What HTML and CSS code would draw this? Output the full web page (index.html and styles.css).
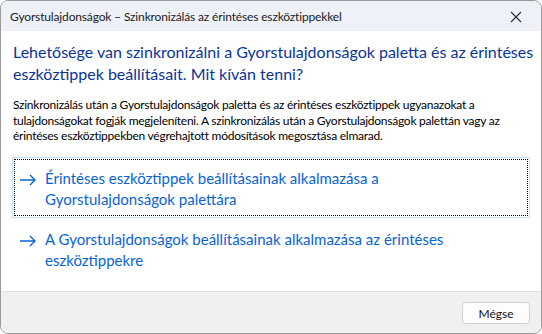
FILE: index.html
```html
<!DOCTYPE html>
<html lang="hu">
<head>
<meta charset="utf-8">
<link rel="stylesheet" href="styles.css">
</head>
<body>
<div class="window">
  <div class="titlebar">
    <span class="title">Gyorstulajdonságok – Szinkronizálás az érintéses eszköztippekkel</span>
    <svg class="close" width="12" height="12" viewBox="0 0 12 12"><path d="M1 1 L11 11 M11 1 L1 11" stroke="#2b2b2b" stroke-width="1.1" fill="none"/></svg>
  </div>
  <div class="content">
    <div class="heading">Lehetősége van szinkronizálni a Gyorstulajdonságok paletta és az érintéses<br>eszköztippek beállításait. Mit kíván tenni?</div>
    <div class="body">Szinkronizálás után a Gyorstulajdonságok paletta és az érintéses eszköztippek ugyanazokat a<br>tulajdonságokat fogják megjeleníteni. A szinkronizálás után a Gyorstulajdonságok palettán vagy az<br>érintéses eszköztippekben végrehajtott módosítások megosztása elmarad.</div>
    <div class="links">
      <div class="link focused">
        <svg class="arrow" width="18" height="12" viewBox="0 0 18 12"><path d="M1 6 H16 M11 1 L16 6 L11 11" stroke="currentColor" stroke-width="1.4" fill="none"/></svg>
        <span class="ltext">Érintéses eszköztippek beállításainak alkalmazása a<br>Gyorstulajdonságok palettára</span>
      </div>
      <div class="link">
        <svg class="arrow" width="18" height="12" viewBox="0 0 18 12"><path d="M1 6 H16 M11 1 L16 6 L11 11" stroke="currentColor" stroke-width="1.4" fill="none"/></svg>
        <span class="ltext">A Gyorstulajdonságok beállításainak alkalmazása az érintéses<br>eszköztippekre</span>
      </div>
    </div>
  </div>
  <div class="footer">
    <button class="btn">Mégse</button>
  </div>
</div>
</body>
</html>
```
FILE: styles.css
```css
html, body { margin: 0; padding: 0; background: #ffffff; }
body { font-family: Lato, "Noto Sans", sans-serif; }
.window {
  width: 542px; height: 334px; box-sizing: border-box;
  border: 1px solid #9a9a9a; border-radius: 8px; overflow: hidden;
  display: flex; flex-direction: column; background: #fff;
}
.titlebar {
  height: 30px; flex: none; background: #eef2f8;
  display: flex; align-items: center; justify-content: space-between;
  padding: 0 19px 0 9px;
}
.title { font-size: 12px; color: #1b1b1b; white-space: nowrap; letter-spacing: -0.15px; }
.close { display: block; margin-top: 1px; }
.content { flex: 1; padding: 10px 11px 0 11px; }
.heading { font-size: 16px; line-height: 22px; color: #0a3596; padding-left: 1px; white-space: nowrap; }
.body { margin-top: 12px; font-size: 12px; line-height: 15.5px; color: #000; padding-left: 1px; white-space: nowrap; letter-spacing: -0.25px; }
.links { margin-top: 13px; }
.link {
  height: 61px; box-sizing: border-box; border: 1px solid transparent;
  display: flex; align-items: flex-start; padding: 10px 0 0 6px; color: #0a64d0;
}
.link.focused { border-color: #c4e0f7; outline: 1px dotted #000; outline-offset: -3px; }
.arrow { flex: none; margin-top: 6px; margin-right: 8px; }
.ltext { font-size: 15px; line-height: 21.5px; white-space: nowrap; }
.footer {
  height: 42px; flex: none; box-sizing: border-box; border-top: 1px solid #dfdfdf; background: #f0f0f0;
  display: flex; justify-content: flex-end; align-items: center; padding: 0 11px 0 0;
}
.btn {
  width: 68px; height: 22px; border: 1px solid #d0d0d0; border-radius: 4px; background: #fdfdfd;
  font-family: inherit; font-size: 12px; color: #111; padding: 0; margin-top: 1px;
}
```
